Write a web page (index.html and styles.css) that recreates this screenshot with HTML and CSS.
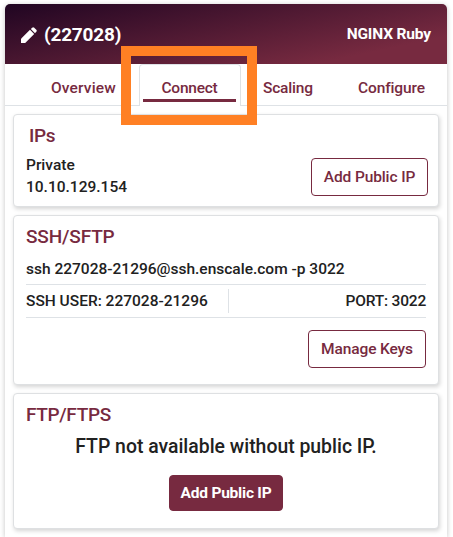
FILE: index.html
```
<!DOCTYPE html>
<html lang="en">
<head>
<meta charset="utf-8">
<title>NGINX Ruby – Connect</title>
<link rel="stylesheet" href="styles.css">
</head>
<body>
<main class="panel">
  <header class="header">
    <svg class="pencil" viewBox="0 0 16 16" aria-hidden="true">
      <path d="M0 16V11.8L9 2.8L13.2 7L4.2 16Z"/>
      <path d="M9.8 2L11.2.7Q12.2-.2 13.2.7L15.3 2.8Q16.2 3.8 15.3 4.8L14 6.2Z"/>
    </svg>
    <h1 class="node-id">(227028)</h1>
    <span class="stack">NGINX Ruby</span>
  </header>
  <nav class="tabs">
    <a class="tab overview">Overview</a>
    <a class="tab active"><span class="tab-label">Connect</span></a>
    <a class="tab scaling">Scaling</a>
    <a class="tab configure">Configure</a>
    <div class="highlight"></div>
  </nav>
  <section class="card ips">
    <div>
      <h2 class="title title-ips">IPs</h2>
      <div>Private</div>
      <div>10.10.129.154</div>
    </div>
    <button class="btn add-ip">Add Public IP</button>
  </section>
  <section class="card ssh">
    <h2 class="title">SSH/SFTP</h2>
    <div class="command">ssh 227028-21296@ssh.enscale.com -p 3022</div>
    <div class="details">
      <span class="user">SSH USER: 227028-21296</span>
      <span class="port">PORT: 3022</span>
    </div>
    <button class="btn manage">Manage Keys</button>
  </section>
  <section class="card ftp">
    <h2 class="title title-ftp">FTP/FTPS</h2>
    <p class="message">FTP not available without public IP.</p>
    <button class="btn primary">Add Public IP</button>
  </section>
</main>
</body>
</html>
```
FILE: styles.css
```
* { box-sizing: border-box; }

body {
  margin: 0;
  padding: 4px 0 0 5px;
  height: 537px;
  overflow: hidden;
  background: #fff;
  color: #212121;
  font: 500 15.5px/22px Roboto, "Liberation Sans", sans-serif;
}

.panel {
  width: 442px;
  height: 533px;
  border-radius: 5px 5px 0 0;
  box-shadow: 0 1px 5px rgba(0, 0, 0, .24);
}

.header {
  display: flex;
  align-items: center;
  height: 60px;
  padding: 0 16px;
  border-radius: 5px 5px 0 0;
  background: linear-gradient(168deg, #200522 0%, #772a40 82%);
  color: #fff;
}

.pencil {
  width: 16px;
  height: 16px;
  margin-top: 2px;
  fill: #fff;
}

.node-id {
  margin: 1px 0 0 7px;
  font-size: 19px;
  font-weight: 700;
  letter-spacing: -.2px;
}

.stack {
  margin-left: auto;
  font-weight: 700;
  letter-spacing: -.15px;
}

.tabs {
  position: relative;
  display: grid;
  grid-template-columns: 134px 102px 1fr 1fr;
  height: 42px;
  color: #772a40;
}

.tab {
  padding-top: 13px;
  border-bottom: 1px solid #dee2e6;
}

.overview { padding-left: 46px; letter-spacing: .17px; }
.scaling { padding-left: 22px; letter-spacing: -.2px; }
.configure { padding-left: 14px; letter-spacing: -.12px; }

.active {
  padding: 0 4px 0 3px;
  border: 1px solid #dee2e6;
  border-bottom: 0;
  border-radius: 4px 4px 0 0;
}

.tab-label {
  display: block;
  height: 37px;
  padding-top: 12px;
  border-bottom: 3px solid #772a40;
  text-align: center;
  letter-spacing: -.25px;
}

.highlight {
  position: absolute;
  left: 116px;
  top: -18px;
  width: 136px;
  height: 79px;
  border: 10px solid #ff8024;
}

.card {
  width: 426px;
  margin: 8px 0 0 8px;
  padding: 9px 12px 0;
  border: 1px solid #dee0e2;
  border-radius: 4px;
  background: #fff;
  box-shadow: 1px 2px 4px rgba(0, 0, 0, .17);
}

.title {
  margin: 0;
  color: #772a40;
  font-size: 19px;
  font-weight: 500;
  line-height: 24px;
  letter-spacing: -.15px;
}

.btn {
  display: block;
  width: 118px;
  height: 38px;
  padding: 0;
  border: 1px solid #772a40;
  border-radius: 4px;
  background: #fff;
  color: #772a40;
  font: inherit;
  letter-spacing: -.12px;
}

.ips {
  display: flex;
  justify-content: space-between;
  height: 93px;
  padding-right: 10px;
}

.title-ips { margin: 0 0 6px 3px; letter-spacing: -.4px; }
.add-ip { width: 117px; margin-top: 34px; }

.ssh { height: 170px; }
.command { margin-top: 9px; }

.details {
  display: flex;
  align-items: center;
  height: 34px;
  margin-top: 4px;
  border-top: 1px solid #dee2e6;
  border-bottom: 1px solid #dee2e6;
}

.user {
  width: 203px;
  border-right: 1px solid #dee2e6;
  line-height: 24px;
}

.port { margin-left: auto; letter-spacing: -.2px; }
.manage { margin: 12px 0 0 auto; }

.ftp { height: 136px; }
.title-ftp { letter-spacing: -.35px; }

.message {
  margin: 7px 0 15px;
  font-size: 19.4px;
  line-height: 26px;
  text-align: center;
}

.primary {
  width: 114px;
  height: 36px;
  margin: 0 auto;
  background: #772a40;
  color: #fff;
  font-weight: 700;
  letter-spacing: -.22px;
}
```
